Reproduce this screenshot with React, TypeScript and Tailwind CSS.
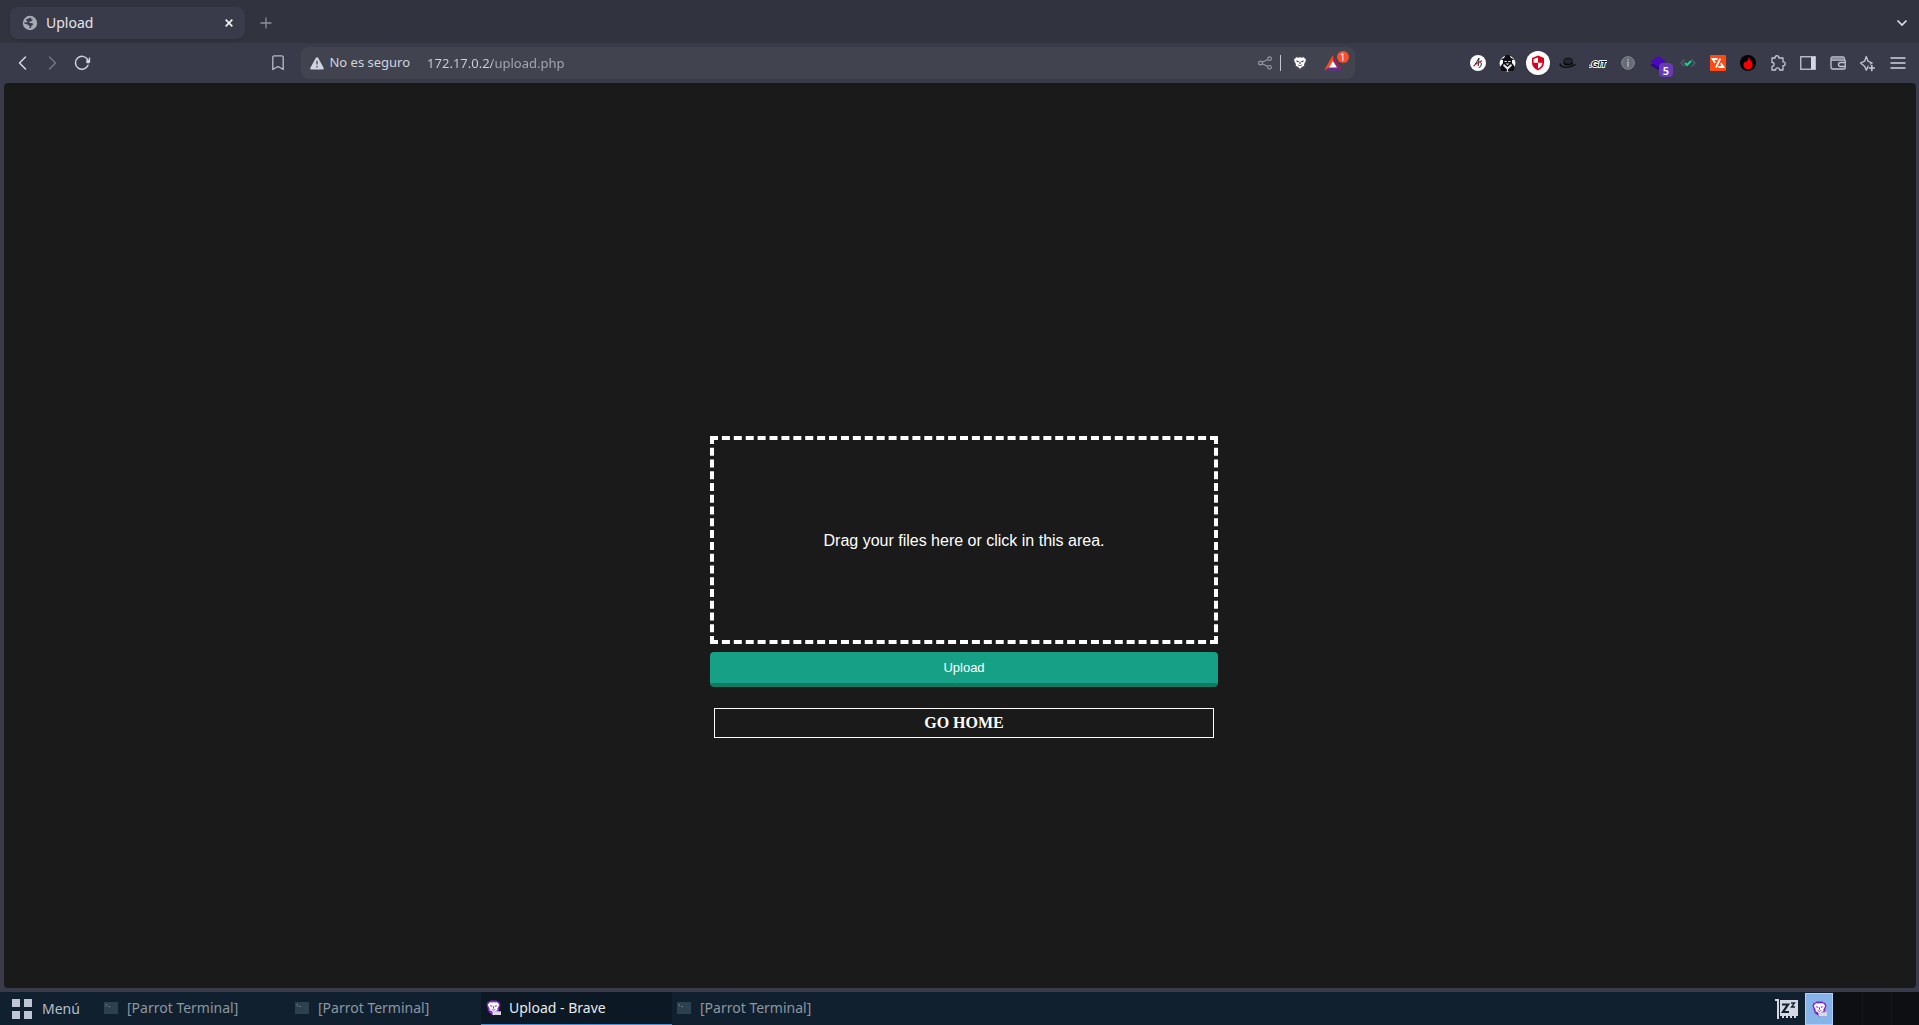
import React from "react";

type P = { children?: React.ReactNode };

function Ico({ label, children }: { label: string } & P) {
  return (
    <button type="button" aria-label={label} className="relative flex h-8 w-[30px] shrink-0 items-center justify-center">
      {children}
    </button>
  );
}

const line = { fill: "none", stroke: "#c3c6d3", strokeWidth: 1.3, strokeLinecap: "round", strokeLinejoin: "round" } as const;

function Globe() {
  return (
    <svg width="16" height="16" viewBox="0 0 16 16">
      <circle cx="8" cy="8" r="7.2" fill="#a7aab3" />
      <path d="M4 4.500 7.500 3 9.500 2.600 8.800 4.200 11 4.600 9.600 6.200 7.600 6.600 7.400 8 10.500 8.200 11.200 9.600 9.500 10.800 9 12.800 7.200 13.600 7.800 11.400 6 9.800 2.200 8.600 2.500 7.200 5 7.600 5.600 6 4.200 5.800Z" fill="#393b4a" />
    </svg>
  );
}

function Lion({ shield, face }: { shield: string; face: string }) {
  return (
    <>
      <path d="M4.800.5h6.400l1.400 1.400 1.500-.1L15.500 5l-.6 1.700-1.300 5.100-1.500 1.900L8 16.500l-4.100-2.800-1.500-1.900L1.100 6.700.5 5l1.400-3.200 1.500.1Z" fill={shield} />
      <path d="M4.300 2.300 6.200 2.700 8 2.300 9.800 2.700 11.700 2.300 14 4.800 13.300 6.800 12 9.200 12.300 10.800 10 11.700 8 13.800 6 11.700 3.700 10.800 4 9.200 2.700 6.800 2 4.800Z" fill={face} />
      <path d="M4 5.500 6.900 6 6.500 7.200 4.900 7ZM12 5.500 9.100 6 9.500 7.200 11.100 7ZM7.600 6.500h.8L8.700 8.800 8 9.300 7.300 8.800ZM5.700 9.200 8 10.600 10.300 9.200 9.600 10.500 8 11.300 6.400 10.500Z" fill={shield} />
    </>
  );
}

function Terminal() {
  return (
    <svg width="14" height="12" viewBox="0 0 14 12" className="shrink-0">
      <rect width="14" height="12" fill="#2c404d" />
      <path d="M1.500 2 3 3 1.500 4M4 4.500h2" fill="none" stroke="#71818d" strokeWidth=".8" />
    </svg>
  );
}

function TabStrip() {
  return (
    <div className="flex h-[43px] items-center bg-[#31343f] pl-[10px] pr-[9px]">
      <div className="mt-[3px] flex h-8 w-[235px] items-center rounded-lg bg-[#393b4a] pl-3 pr-2 shadow-sm">
        <Globe />
        <span className="ml-2 flex-1 text-sm text-[#e4e5ea]">Upload</span>
        <button type="button" aria-label="Cerrar pestaña" className="flex h-4 w-4 items-center justify-center">
          <svg width="8" height="8" viewBox="0 0 8 8"><path d="m.7.700 6.600 6.600M7.300.7.7 7.300" fill="none" stroke="#f1f1f4" strokeWidth="1.700" /></svg>
        </button>
      </div>
      <button type="button" aria-label="Nueva pestaña" className="ml-[11px] mt-[3px] flex h-5 w-5 items-center justify-center">
        <svg width="12" height="12" viewBox="0 0 12 12"><path d="M6 .5v11M.5 6h11" fill="none" stroke="#8d909b" strokeWidth="1.300" /></svg>
      </button>
      <button type="button" aria-label="Buscar pestañas" className="ml-auto mt-[3px] flex h-4 w-4 items-center justify-center">
        <svg width="12" height="8" viewBox="0 0 12 8"><path d="m1.500 1.500 4.500 4.500 4.500-4.500" fill="none" stroke="#dcdee6" strokeWidth="1.700" /></svg>
      </button>
    </div>
  );
}

function AddressBar() {
  return (
    <div className="flex h-8 min-w-0 flex-[1052_1_0%] items-center rounded-lg bg-[#41444f] pl-[9px] pr-2 text-[13px]">
      <svg width="14" height="13" viewBox="0 0 14 13" className="shrink-0">
        <path d="M5.900.8a1.250 1.250 0 0 1 2.200 0l5.500 9.900A1.200 1.200 0 0 1 12.500 12.500h-11A1.200 1.200 0 0 1 .4 10.700Z" fill="#d0d4e0" />
        <path d="M7 3.800v3.700M7 9v1.500" stroke="#555866" strokeWidth="1.500" />
      </svg>
      <span className="ml-[5px] shrink-0 text-[#d0d3de]">No es seguro</span>
      <input
        aria-label="Dirección"
        defaultValue="172.17.0.2/upload.php"
        className="ml-[17px] h-8 min-w-0 flex-1 bg-[linear-gradient(90deg,#ced1dc_65px,#a7aab6_65px)] bg-clip-text text-transparent outline-none"
      />
      <button type="button" aria-label="Compartir" className="flex h-6 w-[30px] items-center justify-center">
        <svg width="14" height="14" viewBox="0 0 14 14" fill="none" stroke="#9598a5" strokeWidth="1.200">
          <circle cx="2.500" cy="7" r="1.900" /><circle cx="11.500" cy="2.700" r="1.800" /><circle cx="11.500" cy="11.300" r="1.800" /><path d="m4.200 6.200 5.600-2.700M4.200 7.800l5.600 2.700" />
        </svg>
      </button>
      <span className="h-4 w-px bg-[#c3c6d0]" />
      <button type="button" aria-label="Brave Shields" className="ml-1 flex h-6 w-[30px] items-center justify-center">
        <svg width="16" height="17" viewBox="0 0 16 17"><Lion shield="#4a4759" face="#ffffff" /></svg>
      </button>
      <button type="button" aria-label="Brave Rewards" className="relative ml-1 flex h-8 w-7 items-center justify-center">
        <svg width="18" height="16" viewBox="0 0 18 16">
          <path d="M9 0 0 15.500 6 12 9 7Z" fill="#ff4a20" /><path d="m9 0 9 15.500L12 12 9 7Z" fill="#9e1f63" /><path d="M0 15.500h18L12.300 12H6Z" fill="#662d91" /><path d="m9 6 4 6.600H5Z" fill="#fff" />
        </svg>
        <span className="absolute right-[-2px] top-1 flex h-3 w-3 items-center justify-center rounded-full bg-[#fc4f29] text-[10px] leading-3 text-white">1</span>
      </button>
    </div>
  );
}

function Extensions() {
  return (
    <div className="flex shrink-0 items-center">
      <Ico label="Extensión A">
        <svg width="16" height="16" viewBox="0 0 16 16"><circle cx="8" cy="8" r="8" fill="#fff" /><path d="m4 11.500 5-8.500-.8 8M5.500 8.500 9 7.500M11.500 5.500 9.500 7l2 1.500-.8 3-2 1" fill="none" stroke="#292630" strokeWidth="1" /><path d="m3.500 10.500 3-1.300L12 6.500" fill="none" stroke="#e12b58" strokeWidth="1" /></svg>
      </Ico>
      <Ico label="Extensión agente">
        <svg width="17" height="17" viewBox="0 0 17 17"><circle cx="8.500" cy="8.500" r="7.900" fill="#fff" /><path d="M5 3 6.500 0h4L12 3l2.500 1v1h-12V4Z" fill="#101014" /><path d="M4 5h9v3l3 4-1.500 4H2.500L1 12l3-4Z" fill="#101014" /><path d="M5.500 6h2.300v1H5.500ZM9.200 6h2.300v1H9.200ZM6.500 8.500h4L8.500 10ZM5 9l3.500 3L12 9l1 1.500-4 4v2H8v-2l-4-4Z" fill="#e9e9ed" /></svg>
      </Ico>
      <Ico label="Extensión escudo">
        <span className="flex h-6 w-6 shrink-0 items-center justify-center rounded-full bg-white shadow">
          <svg width="14" height="16" viewBox="0 0 14 16"><path d="M7 .5 13 3v4.500c0 3.500-2.500 6.500-6 8-3.500-1.500-6-4.500-6-8V3Z" fill="#d9001b" /><path d="M7 2.500v5.300H2.600V4.100ZM7 7.800h4.400C11.200 10.400 9.500 12.400 7 13.700Z" fill="#fff" /></svg>
        </span>
      </Ico>
      <Ico label="Extensión sombrero">
        <svg width="18" height="12" viewBox="0 0 18 12"><path d="M1.500 6.500C.5 7.500 1.500 9 4 9.800c3 .9 8 .5 12.500-2.500M5 6.800 5.600 2.500c2-1.200 5-1.200 7 0L13.300 7" fill="none" stroke="#0b0b0e" strokeWidth="1.400" /><path d="M5.600 2.600c2-1.200 5-1.200 7 0l.5 2.400c-2.300 1.300-5.500 1.400-7.900.2Z" fill="#25262f" /><path d="M5 5.500c2.500 1.500 5.800 1.400 8.300 0v2c-2.500 1.400-6 1.400-8.500.2Z" fill="#0b0b0e" /></svg>
      </Ico>
      <Ico label="DotGit">
        <svg width="18" height="12" viewBox="0 0 18 12"><text x="0" y="10" fontFamily="Liberation Sans, sans-serif" fontSize="9" fontWeight="700" fill="#111" stroke="#f4f4ee" strokeWidth="1.800" paintOrder="stroke" fontStyle="italic">.GIT</text></svg>
      </Ico>
      <Ico label="Información">
        <svg width="14" height="14" viewBox="0 0 14 14"><circle cx="7" cy="7" r="6.300" fill="#666b76" stroke="#8b8f99" /><path d="M7 3v1.500M7 5.500V11" stroke="#aeb3bd" strokeWidth="1.500" /></svg>
      </Ico>
      <Ico label="Wappalyzer">
        <svg width="18" height="16" viewBox="0 0 18 16"><path d="m1 10 8-4 8 4-8 5Z" fill="#32068c" /><path d="m1 6.500 4-2.300L9 1l3 2 5 3.500-8 5Z" fill="#4b08bd" /></svg>
        <span className="absolute bottom-0.5 right-0 flex h-[14px] w-[14px] items-center justify-center rounded-sm bg-[#673ab7] text-[11px] font-semibold leading-none text-white">5</span>
      </Ico>
      <Ico label="Extensión código">
        <svg width="16" height="10" viewBox="0 0 16 10"><path d="M4.500 1.500 1 5l3.500 3.500M11.500 1.500 15 5l-3.500 3.500" fill="none" stroke="#4b6070" strokeWidth="1.500" /><path d="m4.800 5 2.200 2 4-4" fill="none" stroke="#12d88b" strokeWidth="2" /></svg>
      </Ico>
      <Ico label="Extensión proxy">
        <svg width="16" height="16" viewBox="0 0 16 16"><rect width="16" height="16" rx="1" fill="#ff4a12" /><path d="M7.500 4H2.500l2.700 3.700M10.300 3.500 6 12.500M8.500 12h5l-2.700-3.700" fill="none" stroke="#fff" strokeWidth="1.800" /></svg>
      </Ico>
      <Ico label="Extensión llama">
        <svg width="16" height="16" viewBox="0 0 16 16"><circle cx="8" cy="8" r="8" fill="#000" /><path d="M8.700 1.500c.3 2.500 3.900 4.900 3.900 8.200 0 3-2 4.500-4.500 4.500-2.800 0-4.700-1.600-4.700-4.200 0-1.700 1-2.700 2-4l.5 1.500C8 5.500 8.800 4 8.700 1.500Z" fill="#f60000" /></svg>
      </Ico>
      <Ico label="Extensiones">
        <svg width="16" height="17" viewBox="0 0 16 17" {...line}><path d="M2 3h3.200c-.8-3 4.200-3 3.600 0H13v4c3-.7 3 4.200 0 3.600V15H9.500c.4-2.900-4.300-2.900-3.800 0H2v-3.700c2.800.3 2.800-4.200 0-3.800Z" /></svg>
      </Ico>
      <Ico label="Panel lateral">
        <svg width="16" height="14" viewBox="0 0 16 14"><rect x=".75" y=".75" width="14.500" height="12.500" fill="none" stroke="#c3c6d3" strokeWidth="1.300" /><path d="M11 1h4v12h-4Z" fill="#d4d7e1" /></svg>
      </Ico>
      <Ico label="Cartera">
        <svg width="16" height="14" viewBox="0 0 16 14" {...line}><path d="M14.500 4V2.500a1.500 1.500 0 0 0-1.500-1.500H2.500a1.500 1.500 0 0 0 0 3h12a.7.7 0 0 1 .7.700v7.100a1.200 1.200 0 0 1-1.200 1.200H2.700A1.700 1.700 0 0 1 1 11.300V2.500M15 6.500h-4.500a2 2 0 0 0 0 4H15" /><path d="M2 2.500h12" stroke="#858896" /></svg>
      </Ico>
      <Ico label="Leo">
        <svg width="17" height="17" viewBox="0 0 17 17" {...line}><path d="M9 11.200l-1.700 4-1.700-4L1.500 8l4.100-1.800L7.300 1.500 9 6.200 13.200 8l-2 1" /><path d="M12.800 10.500v5M10.300 13h5" strokeWidth="1.700" /></svg>
      </Ico>
      <Ico label="Menú principal">
        <svg width="16" height="12" viewBox="0 0 16 12"><path d="M.5 1h15M.5 6h15M.5 11h15" stroke="#d0d3de" strokeWidth="1.300" /></svg>
      </Ico>
    </div>
  );
}

function Toolbar() {
  return (
    <div className="flex h-10 items-center bg-[#393b4a] pl-[7px] pr-[6px]">
      <Ico label="Atrás">
        <svg width="9" height="14" viewBox="0 0 9 14" {...line} stroke="#d7dae4"><path d="M7.500 1 1.500 7l6 6" strokeWidth="1.500" /></svg>
      </Ico>
      <Ico label="Adelante">
        <svg width="9" height="14" viewBox="0 0 9 14" {...line} stroke="#777a88"><path d="m1.500 1 6 6-6 6" /></svg>
      </Ico>
      <Ico label="Recargar">
        <svg width="17" height="16" viewBox="0 0 17 16" {...line} stroke="#d0d3df"><path d="M13.600 4.500A6.500 6.500 0 1 0 14 10.300" strokeWidth="1.500" /><circle cx="14" cy="6.500" r="1.900" fill="#d0d3df" stroke="none" /><path d="M15.500 3v4" /></svg>
      </Ico>
      <div className="flex-[169_1_0%]" />
      <Ico label="Marcador">
        <svg width="12" height="16" viewBox="0 0 12 16" {...line} stroke="#b8bbc8"><path d="M.8 14.500V2.300A1.500 1.500 0 0 1 2.300.8h7.400a1.500 1.500 0 0 1 1.500 1.500v12.200l-3.700-2.300a3 3 0 0 0-3 0Z" /></svg>
      </Ico>
      <div className="w-2" />
      <AddressBar />
      <div className="flex-[110_1_0%]" />
      <Extensions />
    </div>
  );
}

function UploadPage() {
  return (
    <main className="mb-1 ml-1 mr-[3px] flex flex-1 flex-col items-center justify-center rounded bg-[#1a1a1a] pl-2 pt-[103px] font-['Liberation_Sans',sans-serif]">
      <form className="w-[508px]" onSubmit={(e) => e.preventDefault()}>
        <label className="flex h-[208px] cursor-pointer items-center justify-center border-4 border-dashed border-white pt-0.5 text-base text-white">
          <input type="file" multiple className="sr-only" />
          Drag your files here or click in this area.
        </label>
        <button type="submit" className="mt-2 block h-[35px] w-full rounded border-b-4 border-[#117a60] bg-[#16a085] text-[13px] leading-4 text-white">
          Upload
        </button>
      </form>
      <a href="#home" className="mt-[21px] block h-[30px] w-[500px] border border-white text-center font-['Liberation_Serif',serif] text-base font-bold leading-7 text-white">
        GO HOME
      </a>
    </main>
  );
}

function Task({ title, active = false }: { title: string; active?: boolean }) {
  return (
    <button
      type="button"
      className={
        active
          ? "flex w-[191px] items-center border-b border-[#4a90d9] bg-[#0c1823] pl-[5px] text-[#e8ebee]"
          : "flex w-[191px] items-center border-b border-transparent pl-[5px] text-[#8d979f]"
      }
    >
      {active ? (
        <svg width="15" height="16" viewBox="0 0 16 17" className="shrink-0"><Lion shield="#8128c5" face="#fff" /><path d="M7 12h9v4H7Z" fill="#d9d9df" /></svg>
      ) : (
        <Terminal />
      )}
      <span className={active ? "ml-2" : "ml-[9px]"}>{title}</span>
    </button>
  );
}

function Taskbar() {
  return (
    <footer className="flex h-[33px] items-stretch bg-[#11202f] text-sm">
      <button type="button" className="flex w-[99px] items-center pl-3 text-[#b6bfc8]">
        <svg width="20" height="20" viewBox="0 0 20 20"><path d="M0 0h8v8H0ZM12 0h8v8h-8ZM0 12h8v8H0ZM12 12h8v8h-8Z" fill="#bec5d5" /></svg>
        <span className="ml-[10px]">Menú</span>
      </button>
      <Task title="[Parrot Terminal]" />
      <Task title="[Parrot Terminal]" />
      <Task title="Upload - Brave" active />
      <Task title="[Parrot Terminal]" />
      <div className="ml-auto flex items-center pr-[7px]">
        <svg width="23" height="20" viewBox="0 0 23 20">
          <path d="M0 1h3v19" fill="none" stroke="#d4d8e3" strokeWidth="2" /><path d="M5 1h18v16h-2v2h-2v-2h-2v2h-2v-2h-2v2h-2v-2H9v2H7v-2H5Z" fill="#d4d8e3" />
          <path d="M7 5.500h6L8 13h6" fill="none" stroke="#11202f" strokeWidth="2.200" /><path d="M16 4h3.500L16.500 8H20" fill="none" stroke="#11202f" strokeWidth="1.300" />
        </svg>
      </div>
      <button type="button" aria-label="Espacio de trabajo 1" className="mt-px flex w-7 items-center justify-center border border-[#acd0f8] bg-[#88b3e8]">
        <svg width="15" height="16" viewBox="0 0 16 17"><Lion shield="#7c2db9" face="#fff" /><path d="M7 12h9v4H7Z" fill="#d9d9df" /></svg>
      </button>
      <button type="button" aria-label="Espacio de trabajo 2" className="w-[29px] bg-[#0e0f13]" />
      <button type="button" aria-label="Espacio de trabajo 3" className="w-[29px] border-l border-[#17181c] bg-[#0e0f13]" />
      <button type="button" aria-label="Espacio de trabajo 4" className="w-7 border-l border-[#17181c] bg-[#0e0f13]" />
    </footer>
  );
}

export default function App() {
  return (
    <div className="flex min-h-screen flex-col bg-[#393b4a] font-['Noto_Sans',sans-serif]">
      <TabStrip />
      <Toolbar />
      <UploadPage />
      <Taskbar />
    </div>
  );
}
